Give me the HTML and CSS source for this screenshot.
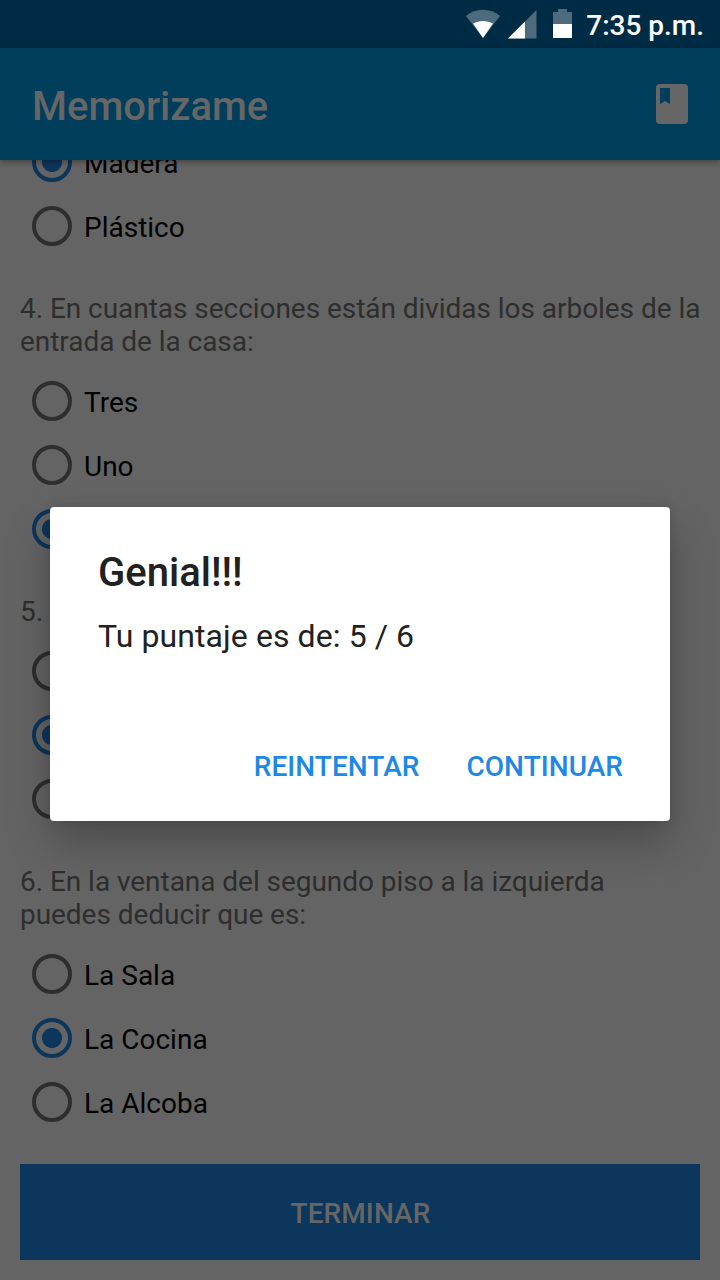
FILE: index.html
```html
<!DOCTYPE html>
<html lang="es">
<head>
<meta charset="utf-8">
<title>Memorizame</title>
<link rel="stylesheet" href="styles.css">
</head>
<body>
<div class="screen">
  <header class="status-bar">
    <svg class="status-icons" width="108" height="32" viewBox="0 0 108 32" aria-hidden="true">
      <path class="icon-dim" d="M0 8C10-.4 24-.4 34 8L17 30Z"/>
      <path class="icon-full" d="M7 15.500C13 12 21 12 27 15.500L17 30Z"/>
      <path class="icon-dim" d="M70.500 2V30.500H42Z"/>
      <path class="icon-full" d="M59 13.500V30.500H42Z"/>
      <path class="icon-dim" d="M92 1H101V4H106V16H87V4H92Z"/>
      <path class="icon-full" d="M87 16H106V30H87Z"/>
    </svg>
    <span class="clock">7:35 p.m.</span>
  </header>
  <div class="toolbar">
    <h1 class="app-title">Memorizame</h1>
    <svg class="book" width="32" height="40" viewBox="0 0 32 40" aria-hidden="true">
      <path fill-rule="evenodd" d="M4 0H28Q32 0 32 4V36Q32 40 28 40H4Q0 40 0 36V4Q0 0 4 0ZM4 4V20L9 17L14 20V4Z"/>
    </svg>
  </div>
  <main class="quiz">
    <div class="option"><i class="radio checked"></i><span class="label">Madera</span></div>
    <div class="option"><i class="radio"></i><span class="label">Plástico</span></div>
    <p class="question">4. En cuantas secciones están dividas los arboles de la<br>entrada de la casa:</p>
    <div class="option"><i class="radio"></i><span class="label">Tres</span></div>
    <div class="option"><i class="radio"></i><span class="label">Uno</span></div>
    <div class="option"><i class="radio checked"></i></div>
    <p class="question">5.</p>
    <div class="option"><i class="radio"></i></div>
    <div class="option"><i class="radio checked"></i></div>
    <div class="option"><i class="radio"></i></div>
    <p class="question">6. En la ventana del segundo piso a la izquierda<br>puedes deducir que es:</p>
    <div class="option"><i class="radio"></i><span class="label">La Sala</span></div>
    <div class="option"><i class="radio checked"></i><span class="label">La Cocina</span></div>
    <div class="option"><i class="radio"></i><span class="label">La Alcoba</span></div>
    <button class="finish">TERMINAR</button>
  </main>
  <section class="dialog" role="dialog">
    <h2 class="dialog-title">Genial!!!</h2>
    <p class="dialog-message">Tu puntaje es de: 5 / 6</p>
    <div class="dialog-actions">
      <button class="action">REINTENTAR</button>
      <button class="action">CONTINUAR</button>
    </div>
  </section>
</div>
</body>
</html>
```
FILE: styles.css
```css
* { box-sizing: border-box; margin: 0; padding: 0; }
body { font-family: Roboto, "Noto Sans", sans-serif; background: #646464; }
button { font: inherit; border: 0; background: none; }
.screen {
  position: relative;
  width: 720px;
  height: 1280px;
  overflow: hidden;
  display: flex;
  flex-direction: column;
  background: #646464;
}
.status-bar {
  flex: none;
  height: 48px;
  display: flex;
  align-items: center;
  justify-content: flex-end;
  padding-right: 16px;
  gap: 12px;
  background: #002b44;
  color: #fff;
}
.clock { font-size: 28px; font-weight: 500; line-height: 32px; padding-top: 4px; }
.icon-dim { fill: #4d6b7c; }
.icon-full { fill: #fff; }
.toolbar {
  flex: none;
  height: 112px;
  display: flex;
  align-items: center;
  justify-content: space-between;
  padding: 0 32px;
  background: #013e5c;
  color: #666;
  box-shadow: 0 2px 6px rgba(0, 0, 0, .35);
  z-index: 1;
}
.app-title { font-size: 40px; font-weight: 500; line-height: 48px; padding-top: 6px; }
.book { fill: #666; }
.quiz { flex: 1; min-height: 0; padding: 0 20px; margin-top: -30px; }
.option { height: 64px; display: flex; align-items: center; padding-left: 12px; gap: 12px; }
.radio {
  width: 40px;
  height: 40px;
  border: 4px solid #2e2e2e;
  border-radius: 50%;
}
.radio.checked {
  border-color: #0c365c;
  background: radial-gradient(circle, #0c365c 9.600px, transparent 10.400px);
}
.label { font-size: 28px; line-height: 33px; padding-top: 3px; color: #000; }
.question {
  padding: 34px 0 11px;
  font-size: 28px;
  line-height: 33px;
  letter-spacing: -.045px;
  white-space: nowrap;
  color: #2e2e2e;
}
.finish {
  display: block;
  width: 100%;
  height: 96px;
  margin-top: 30px;
  padding: 2px 0 0 1px;
  background: #0c365c;
  color: #666;
  font-size: 28px;
  font-weight: 500;
  letter-spacing: .08px;
}
.dialog {
  position: absolute;
  z-index: 2;
  left: 50px;
  top: 507px;
  width: 620px;
  height: 314px;
  padding: 42px 47px 31px 48px;
  display: flex;
  flex-direction: column;
  background: #fff;
  border-radius: 4px;
  box-shadow: 0 22px 44px rgba(0, 0, 0, .25), 0 0 12px rgba(0, 0, 0, .12);
  color: #212121;
}
.dialog-title { font-size: 40px; font-weight: 500; line-height: 48px; }
.dialog-message { font-size: 32px; line-height: 38px; margin-top: 20px; letter-spacing: .09px; }
.dialog-actions { margin-top: auto; display: flex; justify-content: flex-end; gap: 47px; }
.action { height: 48px; color: #1e88e5; font-size: 28px; font-weight: 500; letter-spacing: .05px; }
```
